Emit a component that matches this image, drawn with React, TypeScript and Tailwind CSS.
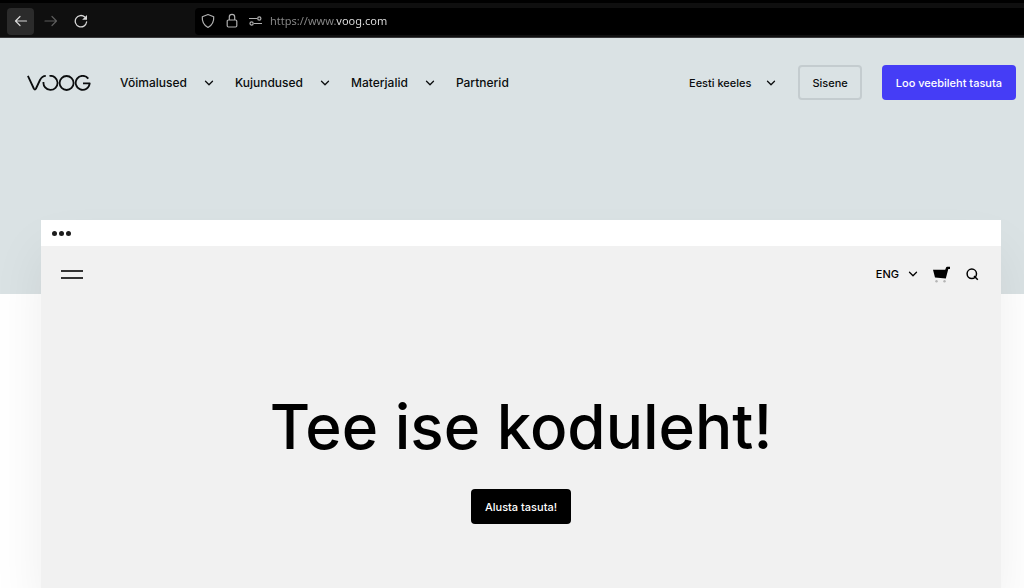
import { FiChevronDown } from "react-icons/fi";

// Menu
const menuItems = [
    { label: "Võimalused", hasChildren: true },
    { label: "Kujundused", hasChildren: true },
    { label: "Materjalid", hasChildren: true },
    { label: "Partnerid", hasChildren: false },
];

const Chevron = () => (
    <FiChevronDown className="size-3.5 shrink-0" strokeWidth={2.2} aria-hidden="true" />
);

const BrowserBar = () => {
    return (
        <div className="flex items-center h-[38px] pt-0.5 bg-[#0f0f0f] border-t-3 border-t-black border-b border-b-[#38383a] text-[#d8d8d8]">
            <div className="flex items-center w-[195px] shrink-0 ps-[7px] gap-[3px]">
                <button type="button" aria-label="Tagasi" className="flex items-center justify-center size-[27px] rounded-sm bg-[#2b2b2b]">
                    <svg width="14" height="14" viewBox="0 0 14 14" fill="none" stroke="currentColor" strokeWidth="1.2" strokeLinecap="round" strokeLinejoin="round">
                        <path d="M12.500 7H1.500M6 2.500L1.500 7 6 11.500" />
                    </svg>
                </button>
                <button type="button" aria-label="Edasi" className="flex items-center justify-center size-[27px] text-[#5c5c5c]">
                    <svg width="14" height="14" viewBox="0 0 14 14" fill="none" stroke="currentColor" strokeWidth="1.2" strokeLinecap="round" strokeLinejoin="round">
                        <path d="M1 7h11.500M8 2.500L12.500 7 8 11.500" />
                    </svg>
                </button>
                <button type="button" aria-label="Laadi uuesti" className="flex items-center justify-center size-[27px]">
                    <svg width="14" height="14" viewBox="0 0 14 14" fill="none" stroke="currentColor" strokeWidth="1.3" strokeLinecap="round">
                        <path d="M12.600 8A5.700 5.700 0 1 1 10.800 3" />
                        <path d="M13 1v4.800H8.200z" fill="currentColor" stroke="none" />
                    </svg>
                </button>
            </div>
            <div className="flex flex-1 items-center h-[27px] ps-1.5 bg-black rounded-s-sm text-[#b0b0b0]">
                <svg className="me-[11px]" width="14" height="16" viewBox="0 0 14 16" fill="none" stroke="currentColor" strokeWidth="1.2" strokeLinejoin="round">
                    <path d="M7 1.500l5.700 2.300c.3 4-1 8.200-5.700 10.700C2.300 12 1 7.800 1.300 3.800z" />
                </svg>
                <svg className="me-[11px]" width="12" height="16" viewBox="0 0 12 16" fill="none" stroke="currentColor" strokeWidth="1.2">
                    <rect x="1.200" y="7" width="9.600" height="7" rx="1.200" />
                    <path d="M3.300 7V4a2.700 2.700 0 0 1 5.400 0v3" />
                </svg>
                <svg className="me-2" width="13" height="12" viewBox="0 0 13 12" fill="none" stroke="currentColor" strokeWidth="1.2">
                    <path d="M0 3.500h8M5 8.500h8" />
                    <circle cx="10.300" cy="3.500" r="1.600" />
                    <circle cx="2.600" cy="8.500" r="1.600" />
                </svg>
                <input
                    type="text"
                    aria-label="Aadress"
                    defaultValue="https://www.voog.com"
                    className="flex-1 min-w-0 text-[11px] leading-5 font-['Noto_Sans',sans-serif] text-transparent bg-clip-text bg-[linear-gradient(90deg,#8b8b8b_66px,#e6e6e6_66px)] outline-none"
                />
            </div>
        </div>
    );
};

const Logo = () => (
    <svg width="64" height="16" viewBox="0 0 64 16" fill="none" stroke="#0b0d0e" strokeWidth="1.800" strokeLinejoin="round" aria-hidden="true">
        <path d="M.9 .8L6.800 13.500q1.100 2 2.200 0L13 5C14.400 2.200 16 1 18.800 .9" />
        <path d="M22.500 .9A7.050 7.050 0 1 1 16.500 7" />
        <circle cx="39.600" cy="8" r="7" />
        <path d="M61.300 3.600A7 7 0 1 0 62.700 8.300H56" />
    </svg>
);

const Header = () => {
    return (
        <header className="flex items-center justify-between ps-[27px] pe-2 pt-[27px] pb-[194px] bg-[#dae2e4] text-[#0b0d0e]">
            <div className="flex items-center gap-[29px]">
                <a href="#" aria-label="Voog">
                    <Logo />
                </a>
                <nav className="flex items-center gap-[19px] text-xs leading-5 font-medium">
                    {menuItems.map((item) => (
                        <a key={item.label} href="#" className="flex items-center gap-[15px] whitespace-nowrap">
                            {item.label}
                            {item.hasChildren && <Chevron />}
                        </a>
                    ))}
                </nav>
            </div>
            <div className="flex items-center text-[11px] leading-5 font-medium">
                <button type="button" className="flex items-center gap-[13px] me-5 whitespace-nowrap">
                    Eesti keeles
                    <Chevron />
                </button>
                <a href="#" className="flex items-center h-[35px] px-3 me-5 rounded-sm border-2 border-[#c4cccf]">
                    Sisene
                </a>
                <a href="#" className="flex items-center h-[35px] px-3.5 rounded-sm bg-[#453df6] text-white whitespace-nowrap">
                    Loo veebileht tasuta
                </a>
            </div>
        </header>
    );
};

const SitePreview = () => {
    return (
        <main className="flex flex-col flex-1 -mt-[74px] ms-[41px] me-[23px] bg-[#f1f1f1] shadow-[0_30px_50px_rgba(0,0,0,0.07)] text-black">
            <div className="flex items-center gap-0.5 h-[26px] ps-[11px] bg-white">
                <span className="size-[5px] rounded-full bg-[#1c1c1c]" />
                <span className="size-[5px] rounded-full bg-[#1c1c1c]" />
                <span className="size-[5px] rounded-full bg-[#1c1c1c]" />
            </div>
            <div className="flex items-center justify-between ps-5 pe-[22px] pt-[18px]">
                <button type="button" aria-label="Menüü" className="flex flex-col gap-[5px] w-[22px]">
                    <span className="w-full h-0.5 bg-[#333333]" />
                    <span className="w-full h-0.5 bg-[#333333]" />
                </button>
                <div className="flex items-center text-[11px] leading-5 font-medium">
                    <button type="button" className="flex items-center gap-[7px] me-[13px]">
                        ENG
                        <Chevron />
                    </button>
                    <button type="button" aria-label="Ostukorv" className="me-[15px]">
                        <svg width="18" height="17" viewBox="0 0 18 17">
                            <path d="M0 3.800h12.200L13.200 1.200Q13.400.8 14 .8h3v2.300h-1.700L12.800 12.600 2 11.400z" fill="#000" />
                            <circle cx="3.500" cy="15.300" r="1.200" fill="#b5b5b5" />
                            <circle cx="11.500" cy="15.300" r="1.200" fill="#b5b5b5" />
                        </svg>
                    </button>
                    <button type="button" aria-label="Otsi">
                        <svg width="13" height="13" viewBox="0 0 13 13" fill="none" stroke="currentColor" strokeWidth="1.500">
                            <circle cx="5.800" cy="5.800" r="4.700" />
                            <path d="M8 8l3.800 3.800" />
                        </svg>
                    </button>
                </div>
            </div>
            <div className="flex flex-col items-center pt-[103px]">
                <h1 className="text-[62px] leading-[80px] font-medium text-center">Tee ise koduleht!</h1>
                <a href="#" className="flex items-center h-[35px] mt-[22px] px-3.5 rounded-sm bg-black text-white text-[11px] leading-5 font-medium">
                    Alusta tasuta!
                </a>
            </div>
        </main>
    );
};

const App = () => {
    return (
        <div className="flex flex-col min-h-screen overflow-hidden bg-white font-['Inter',sans-serif]">
            <BrowserBar />
            <Header />
            <SitePreview />
        </div>
    );
};

export default App;
